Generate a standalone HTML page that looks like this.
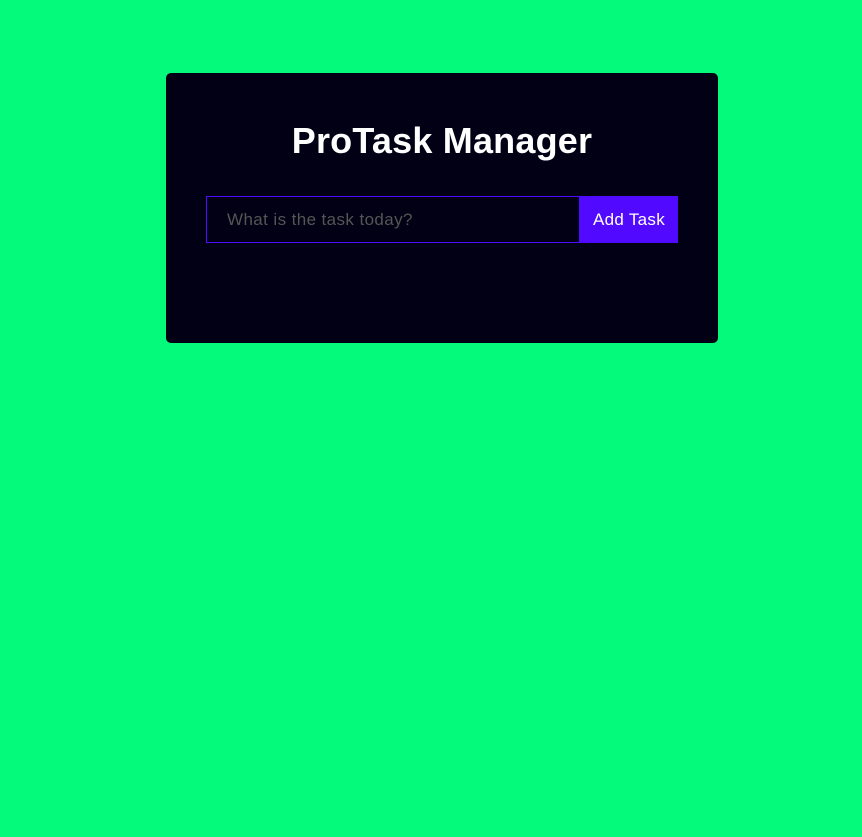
<!DOCTYPE html>
<html><head><style>
body{margin:0;background:#03fa7a;width:862px;height:837px;font-family:"Liberation Sans",sans-serif;}
.card{position:absolute;left:166px;top:73px;width:552px;height:270px;background:#010014;border-radius:5px;}
h1{position:absolute;top:119px;left:166px;width:552px;margin:0;text-align:center;color:#fff;font-size:36px;font-weight:bold;letter-spacing:0.2px;line-height:44px;}
.inp{position:absolute;left:206px;top:196px;width:372px;height:45px;border:1px solid #4f0bff;color:#555;font-size:17px;letter-spacing:0.4px;line-height:45px;box-sizing:content-box;}
.inp span{margin-left:20px;}
.btn{position:absolute;left:580px;top:196px;width:98px;height:47px;background:#5209ff;color:#fff;font-size:17px;letter-spacing:0.3px;line-height:47px;text-align:center;}
</style></head><body>
<div class="card"></div>
<h1>ProTask Manager</h1>
<div class="inp"><span>What is the task today?</span></div>
<div class="btn">Add Task</div>
</body></html>
